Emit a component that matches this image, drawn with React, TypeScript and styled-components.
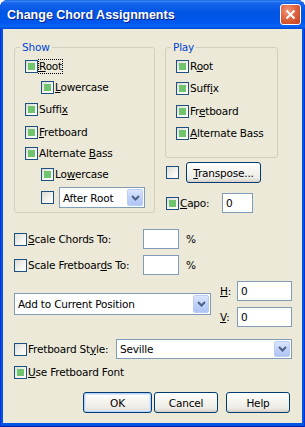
import * as React from "react";
import styled, { createGlobalStyle, css } from "styled-components";

const GlobalStyle = createGlobalStyle`
  html, body {
    margin: 0;
    padding: 0;
    background: #ffffff;
  }
  body {
    font-family: "DejaVu Sans", Tahoma, sans-serif;
    font-size: 10.5px;
    letter-spacing: -0.2px;
    color: #000;
  }
`;

const Window = styled.div`
  width: 305px;
  height: 427px;
  box-sizing: border-box;
  display: flex;
  flex-direction: column;
  background: #0055e5;
  border-radius: 8px 8px 0 0;
  box-shadow: inset 1px 0 #0831d9, inset -1px 0 #0831d9, inset 0 -1px #001ea0;
  overflow: hidden;
`;

const TitleBar = styled.div`
  height: 29px;
  flex: none;
  display: flex;
  align-items: center;
  justify-content: space-between;
  padding: 0 4px 0 7px;
  background: linear-gradient(
    #0a5fdd 0%,
    #3d8cf5 4%,
    #1664ec 10%,
    #0055e5 45%,
    #0058ee 80%,
    #0a66f7 90%,
    #0049d6 100%
  );
`;

const Title = styled.span`
  font-family: "Liberation Sans", Arial, sans-serif;
  font-weight: bold;
  font-size: 12.5px;
  letter-spacing: 0;
  color: #ffffff;
  text-shadow: 1px 1px #0f1f8c;
`;

const CloseButton = styled.div`
  width: 21px;
  height: 21px;
  box-sizing: border-box;
  border: 1px solid #ffffff;
  border-radius: 3px;
  background: radial-gradient(circle at 35% 30%, #f0977a 0%, #e06540 45%, #c23e1c 100%);
  display: flex;
  align-items: center;
  justify-content: center;
`;

const Body = styled.div`
  flex: 1;
  margin: 0 3px 4px;
  background: #ece9d8;
  padding: 12px 11px 0 11px;
  display: flex;
  flex-direction: column;
`;

const Top = styled.div`
  display: grid;
  grid-template-columns: 141px 113px;
  column-gap: 10px;
  align-items: start;
`;

const Column = styled.div`
  display: flex;
  flex-direction: column;
`;

const Group = styled.fieldset<{ $pb: number }>`
  margin: 0;
  min-width: 0;
  padding: 5px 0 ${(p) => p.$pb}px 10px;
  border: 1px solid #d0d0bf;
  border-radius: 3px;
  display: flex;
  flex-direction: column;
`;

const Legend = styled.legend`
  padding: 0 2px;
  margin-left: -5px;
  color: #0046d5;
  line-height: 13px;
  font-size: 10.5px;
`;

const Row = styled.div<{ $mt?: number; $indent?: number; $gap?: number }>`
  display: flex;
  align-items: center;
  margin-top: ${(p) => p.$mt ?? 0}px;
  padding-left: ${(p) => p.$indent ?? 0}px;
  gap: ${(p) => p.$gap ?? 0}px;
`;

const Check = styled.span<{ $on?: boolean }>`
  width: 13px;
  height: 13px;
  flex: none;
  box-sizing: border-box;
  border: 1px solid #1c5180;
  background: linear-gradient(135deg, #dcdcd7 0%, #f4f4f0 60%, #ffffff 100%);
  display: flex;
  align-items: center;
  justify-content: center;
  ${(p) =>
    p.$on &&
    css`
      &::after {
        content: "";
        width: 7px;
        height: 7px;
        background: #6fc46d;
      }
    `}
`;

const Label = styled.span<{ $focus?: boolean; $w?: number }>`
  line-height: 13px;
  border: 1px dotted ${(p) => (p.$focus ? "#000000" : "transparent")};
  white-space: nowrap;
  ${(p) =>
    p.$w &&
    css`
      width: ${p.$w}px;
      flex: none;
      box-sizing: border-box;
    `}
`;

const TextBox = styled.div<{ $w: number }>`
  width: ${(p) => p.$w}px;
  height: 20px;
  flex: none;
  box-sizing: border-box;
  border: 1px solid #7f9db9;
  background: #ffffff;
  padding-left: 3px;
  display: flex;
  align-items: center;
`;

const Combo = styled.div<{ $w: number; $h?: number }>`
  width: ${(p) => p.$w}px;
  height: ${(p) => p.$h ?? 21}px;
  flex: none;
  box-sizing: border-box;
  border: 1px solid #7f9db9;
  background: #ffffff;
  padding: 1px 1px 1px 3px;
  display: flex;
  align-items: center;
`;

const ComboText = styled.span`
  flex: 1;
  white-space: nowrap;
`;

const ComboButton = styled.span`
  width: 16px;
  align-self: stretch;
  box-sizing: border-box;
  border: 1px solid #bccdf3;
  border-radius: 2px;
  background: linear-gradient(#dbe6fe, #bccff8 60%, #b0c5f5);
  display: flex;
  align-items: center;
  justify-content: center;
`;

const Percent = styled.span`
  margin-left: 7px;
`;

const PosSection = styled.div`
  display: flex;
  align-items: center;
  margin-top: 6px;
`;

const Offsets = styled.div`
  display: flex;
  flex-direction: column;
  gap: 6px;
  margin-left: 8px;
`;

const Buttons = styled.div`
  display: flex;
  justify-content: flex-end;
  margin-top: 12px;
  padding-right: 1px;
`;

const Button = styled.div<{ $w: number; $default?: boolean; $ml?: number }>`
  width: ${(p) => p.$w}px;
  height: 21px;
  margin-left: ${(p) => p.$ml ?? 0}px;
  box-sizing: border-box;
  border: 1px solid #003c74;
  border-radius: 3px;
  background: linear-gradient(#ffffff 0%, #f5f4ef 45%, #ecebe6 80%, #d6d0c5 100%);
  display: flex;
  align-items: center;
  justify-content: center;
  ${(p) =>
    p.$default &&
    css`
      box-shadow: inset 0 0 0 1px #b9d1f8, inset 0 0 0 2px #dce7fb;
    `}
`;

const Chevron = () => (
  <svg width="9" height="6" viewBox="0 0 9 6">
    <polyline points="1,1 4.5,4.5 8,1" fill="none" stroke="#4d6185" strokeWidth="2" />
  </svg>
);

const Dropdown = ({ w, h, text }: { w: number; h?: number; text: string }) => (
  <Combo $w={w} $h={h}>
    <ComboText>{text}</ComboText>
    <ComboButton>
      <Chevron />
    </ComboButton>
  </Combo>
);

export default function App() {
  return (
    <>
      <GlobalStyle />
      <Window>
        <TitleBar>
          <Title>Change Chord Assignments</Title>
          <CloseButton>
            <svg width="11" height="11" viewBox="0 0 11 11">
              <path d="M1.5 1.5 L9.5 9.5 M9.5 1.5 L1.5 9.5" stroke="#ffffff" strokeWidth="2" />
            </svg>
          </CloseButton>
        </TitleBar>
        <Body>
          <Top>
            <Group $pb={4}>
              <Legend>Show</Legend>
              <Row>
                <Check $on />
                <Label $focus>
                  <u>R</u>oot
                </Label>
              </Row>
              <Row $mt={6} $indent={16}>
                <Check $on />
                <Label>
                  <u>L</u>owercase
                </Label>
              </Row>
              <Row $mt={7}>
                <Check $on />
                <Label>
                  Suffi<u>x</u>
                </Label>
              </Row>
              <Row $mt={8}>
                <Check $on />
                <Label>
                  <u>F</u>retboard
                </Label>
              </Row>
              <Row $mt={6}>
                <Check $on />
                <Label>
                  Alternate <u>B</u>ass
                </Label>
              </Row>
              <Row $mt={6} $indent={16}>
                <Check $on />
                <Label>
                  Lo<u>w</u>ercase
                </Label>
              </Row>
              <Row $mt={5} $indent={16} $gap={5}>
                <Check />
                <Dropdown w={86} text="After Root" />
              </Row>
            </Group>
            <Column>
              <Group $pb={16}>
                <Legend>Play</Legend>
                <Row>
                  <Check $on />
                  <Label>
                    R<u>o</u>ot
                  </Label>
                </Row>
                <Row $mt={7}>
                  <Check $on />
                  <Label>
                    Suff<u>i</u>x
                  </Label>
                </Row>
                <Row $mt={8}>
                  <Check $on />
                  <Label>
                    Fr<u>e</u>tboard
                  </Label>
                </Row>
                <Row $mt={7}>
                  <Check $on />
                  <Label>
                    <u>A</u>lternate Bass
                  </Label>
                </Row>
              </Group>
              <Row $mt={4} $indent={1} $gap={7}>
                <Check />
                <Button $w={75}>
                  <span>
                    <u>T</u>ranspose...
                  </span>
                </Button>
              </Row>
              <Row $mt={10} $indent={1}>
                <Check $on />
                <Label $w={43}>
                  <u>C</u>apo:
                </Label>
                <TextBox $w={31}>0</TextBox>
              </Row>
            </Column>
          </Top>
          <Row $mt={16}>
            <Check />
            <Label $w={116}>
              <u>S</u>cale Chords To:
            </Label>
            <TextBox $w={36} />
            <Percent>%</Percent>
          </Row>
          <Row $mt={6}>
            <Check />
            <Label $w={116}>
              Scale Fretboar<u>d</u>s To:
            </Label>
            <TextBox $w={36} />
            <Percent>%</Percent>
          </Row>
          <PosSection>
            <Dropdown w={197} h={22} text="Add to Current Position" />
            <Offsets>
              <Row>
                <Label $w={18}>
                  <u>H</u>:
                </Label>
                <TextBox $w={55}>0</TextBox>
              </Row>
              <Row>
                <Label $w={18}>
                  <u>V</u>:
                </Label>
                <TextBox $w={55}>0</TextBox>
              </Row>
            </Offsets>
          </PosSection>
          <Row $mt={12}>
            <Check />
            <Label $w={89}>
              Fretboard St<u>y</u>le:
            </Label>
            <Dropdown w={176} h={20} text="Seville" />
          </Row>
          <Row $mt={6}>
            <Check $on />
            <Label>
              <u>U</u>se Fretboard Font
            </Label>
          </Row>
          <Buttons>
            <Button $w={69} $default>
              OK
            </Button>
            <Button $w={64} $ml={2}>
              Cancel
            </Button>
            <Button $w={64} $ml={8}>
              Help
            </Button>
          </Buttons>
        </Body>
      </Window>
    </>
  );
}
